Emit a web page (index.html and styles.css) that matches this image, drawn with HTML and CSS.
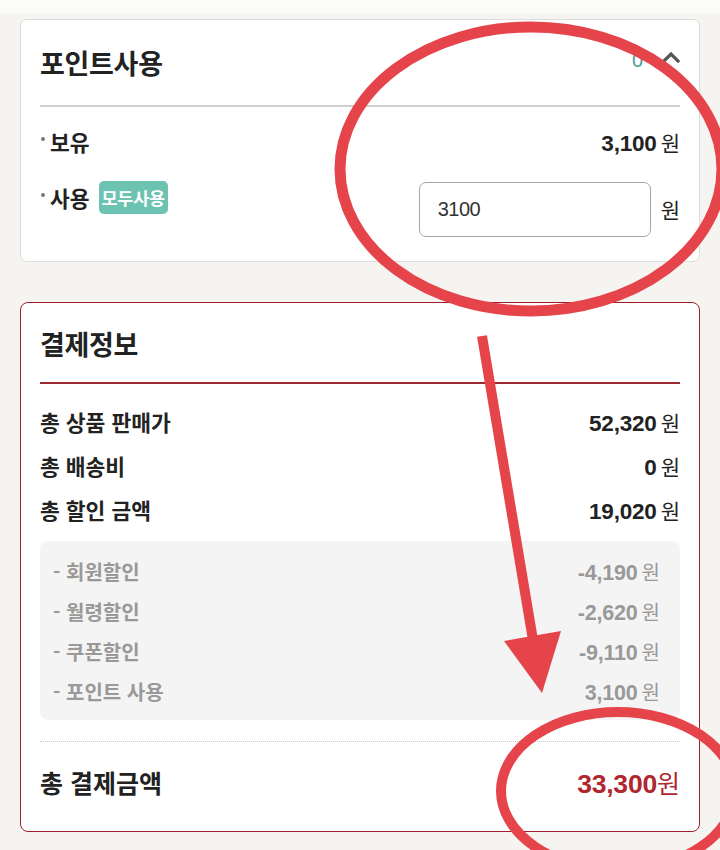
FILE: index.html
```html
<!DOCTYPE html>
<html lang="ko">
<head>
<meta charset="utf-8">
<title>포인트사용 / 결제정보</title>
<link rel="stylesheet" href="styles.css">
</head>
<body>
<div class="topstrip"></div>
<main class="page">
  <section class="card card-point">
    <header class="card-head">
      <h2 class="card-title">포인트사용</h2>
      <div class="head-right">
        <span class="head-count">0</span>
        <svg class="chev" width="18" height="12" viewBox="0 0 18 12"><path d="M2 10 L9 3 L16 10" fill="none" stroke="#555" stroke-width="3.2" stroke-linecap="square"/></svg>
      </div>
    </header>
    <div class="divider-gray"></div>
    <div class="point-body">
      <div class="prow prow-have">
        <span class="plabel"><i class="dot"></i>보유</span>
        <span class="amount"><b class="num">3,100</b><span class="won">원</span></span>
      </div>
      <div class="prow prow-use">
        <span class="plabel"><i class="dot"></i>사용<span class="badge">모두사용</span></span>
        <span class="use-input"><input class="point-input" type="text" value="3100"><span class="won">원</span></span>
      </div>
    </div>
  </section>

  <section class="card card-pay">
    <header class="pay-head">
      <h2 class="card-title">결제정보</h2>
    </header>
    <div class="divider-red"></div>
    <div class="pay-rows">
      <div class="row"><span class="label">총 상품 판매가</span><span class="amount"><b class="num">52,320</b><span class="won">원</span></span></div>
      <div class="row"><span class="label">총 배송비</span><span class="amount"><b class="num">0</b><span class="won">원</span></span></div>
      <div class="row"><span class="label">총 할인 금액</span><span class="amount"><b class="num">19,020</b><span class="won">원</span></span></div>
    </div>
    <div class="discount-box">
      <div class="drow"><span class="dlabel">- 회원할인</span><span class="amount"><b class="num">-4,190</b><span class="won">원</span></span></div>
      <div class="drow"><span class="dlabel">- 월령할인</span><span class="amount"><b class="num">-2,620</b><span class="won">원</span></span></div>
      <div class="drow"><span class="dlabel">- 쿠폰할인</span><span class="amount"><b class="num">-9,110</b><span class="won">원</span></span></div>
      <div class="drow"><span class="dlabel">- 포인트 사용</span><span class="amount"><b class="num">3,100</b><span class="won">원</span></span></div>
    </div>
    <div class="divider-dot"></div>
    <div class="total-row">
      <span class="total-label">총 결제금액</span>
      <span class="total-amount"><b class="num">33,300</b><span class="won">원</span></span>
    </div>
  </section>
</main>

<svg class="annot" width="720" height="850" viewBox="0 0 720 850">
  <ellipse cx="531" cy="169" rx="191" ry="142" fill="none" stroke="#e5444b" stroke-width="11"/>
  <line x1="482" y1="336" x2="533" y2="640" stroke="#e5444b" stroke-width="10"/>
  <polygon points="504,641 561,631 542,693" fill="#e5444b"/>
  <ellipse cx="618" cy="791" rx="117" ry="79" fill="none" stroke="#e5444b" stroke-width="10"/>
</svg>
</body>
</html>
```

FILE: styles.css
```css
* { box-sizing: border-box; }

body {
  margin: 0;
  background: #f6f4f0;
  font-family: "Noto Sans CJK KR", "Noto Sans", sans-serif;
  color: #222;
  position: relative;
  width: 720px;
  height: 850px;
  overflow: hidden;
}

.topstrip {
  height: 13px;
  background: #fbfbfa;
}

.page {
  padding: 6px 20px 0;
  display: flex;
  flex-direction: column;
  gap: 40px;
}

.card {
  background: #fff;
  padding: 0 19px;
}

.card-point {
  border: 1.5px solid #dcdcdc;
  border-radius: 7px;
  padding-bottom: 24px;
}

.card-head {
  height: 85px;
  display: flex;
  align-items: center;
  justify-content: space-between;
}

.card-title {
  margin: 0;
  font-size: 27px;
  font-weight: 700;
  line-height: 36px;
  color: #222;
  letter-spacing: -0.3px;
}

.head-right {
  display: flex;
  align-items: center;
  gap: 19px;
  margin-top: -5px;
}

.head-count {
  font-family: "Liberation Sans", sans-serif;
  font-size: 20px;
  font-weight: 400;
  color: #4f9e90;
}

.chev { display: block; margin-top: -6px; }

.divider-gray {
  height: 1.5px;
  background: #cfcfcf;
}

.point-body {
  padding-top: 17px;
  display: flex;
  flex-direction: column;
  gap: 21px;
}

.prow {
  display: flex;
  justify-content: space-between;
}

.prow-have {
  height: 36px;
  align-items: center;
}

.prow-use {
  align-items: flex-start;
}

.plabel {
  display: flex;
  align-items: center;
  font-size: 21.5px;
  font-weight: 700;
  line-height: 34px;
}

.dot {
  display: inline-block;
  width: 4px;
  height: 4px;
  border-radius: 50%;
  background: #777;
  margin: 0 5px 6px 1px;
}

.badge {
  margin-left: 9px;
  background: #6dc3b1;
  color: #fff;
  font-size: 17.5px;
  font-weight: 700;
  line-height: 33px;
  height: 33px;
  padding: 0 3px;
  border-radius: 5px;
  letter-spacing: -0.3px;
}

.use-input {
  display: flex;
  align-items: center;
  gap: 10px;
  margin-top: 1px;
}

.point-input {
  width: 232px;
  height: 55px;
  border: 1.5px solid #a6a6a6;
  border-radius: 7px;
  padding: 0 18px;
  font-family: "Liberation Sans", sans-serif;
  font-size: 20px;
  color: #333;
  background: #fff;
  outline: none;
  letter-spacing: -0.5px;
}

.amount {
  display: flex;
  align-items: baseline;
  gap: 4px;
}

.num {
  font-family: "Liberation Sans", sans-serif;
  font-weight: 700;
  font-size: 22.5px;
  letter-spacing: -0.2px;
}

.won {
  font-size: 21px;
  font-weight: 400;
}

.card-pay {
  border: 1.5px solid #9b1f2a;
  border-radius: 8px;
}

.pay-head {
  padding: 23px 0 20px;
}

.divider-red {
  height: 2px;
  background: #9b2a30;
}

.pay-rows {
  padding-top: 16px;
}

.row {
  height: 44px;
  display: flex;
  align-items: center;
  justify-content: space-between;
}

.label {
  font-size: 21.5px;
  font-weight: 700;
}

.discount-box {
  margin-top: 9px;
  background: #f4f4f4;
  border-radius: 8px;
  padding: 11px 20px 8px 13px;
}

.drow {
  height: 40px;
  display: flex;
  align-items: center;
  justify-content: space-between;
  color: #999;
}

.dlabel {
  font-size: 20px;
  font-weight: 700;
}

.drow .num { font-size: 21.5px; }
.drow .won { font-size: 20px; }

.divider-dot {
  margin-top: 21px;
  border-top: 1.5px dotted #c8c8c8;
}

.total-row {
  padding: 19px 0 28px;
  height: 89px;
  display: flex;
  align-items: center;
  justify-content: space-between;
}

.total-label {
  font-size: 25px;
  font-weight: 700;
}

.total-amount {
  display: flex;
  align-items: baseline;
  color: #b0272f;
}

.total-amount .num {
  font-size: 26.5px;
}

.total-amount .won {
  font-size: 25px;
}

.annot {
  position: absolute;
  left: 0;
  top: 0;
  pointer-events: none;
}
```
